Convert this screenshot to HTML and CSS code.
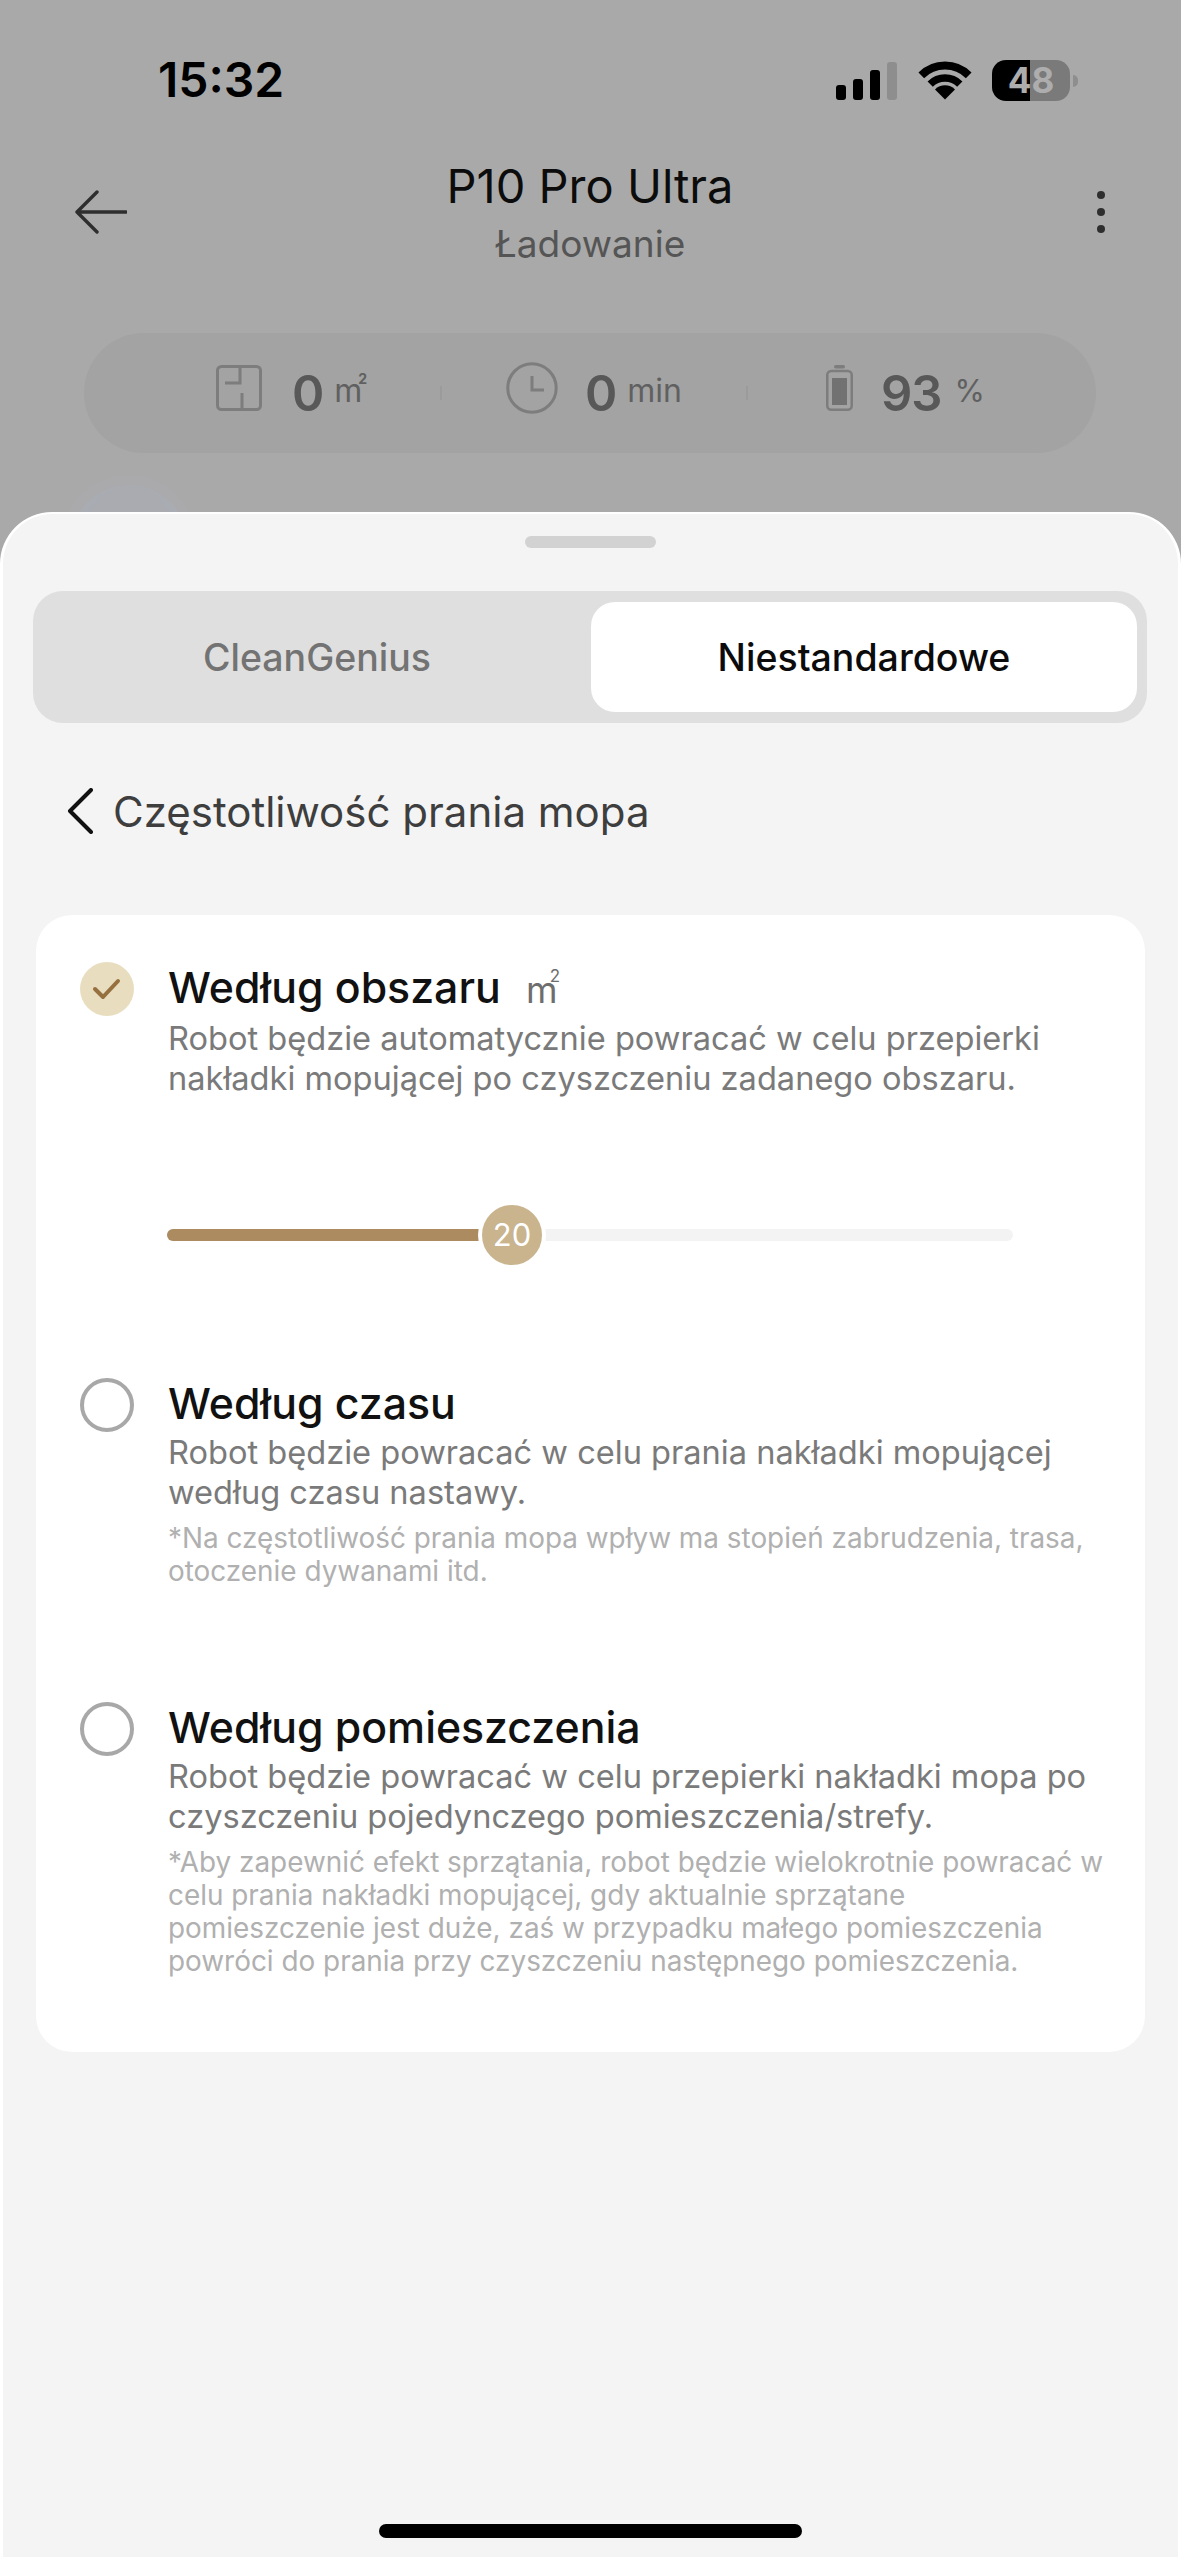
FILE: index.html
```html
<!DOCTYPE html>
<html lang="pl">
<head>
<meta charset="utf-8">
<title>P10 Pro Ultra</title>
<link rel="stylesheet" href="styles.css">
</head>
<body>
<div class="screen">
  <div class="backdrop">
    <div class="statusbar">
      <span class="time">15:32</span>
      <div class="status-icons">
        <div class="signal">
          <i class="bar b1"></i><i class="bar b2"></i><i class="bar b3"></i><i class="bar b4"></i>
        </div>
        <svg class="wifi" viewBox="0 0 54 40" width="54" height="40">
          <path d="M3.3 15.3A33.5 33.5 0 0 1 50.7 15.3" fill="none" stroke="#000" stroke-width="8"/>
          <path d="M12.2 24.2A21 21 0 0 1 41.8 24.2" fill="none" stroke="#000" stroke-width="7.5"/>
          <path d="M27 39.5L17 29.5A14 14 0 0 1 37 29.5Z" fill="#000"/>
        </svg>
        <div class="battery"><span class="battery-body">48</span><i class="battery-nub"></i></div>
      </div>
    </div>

    <div class="nav">
      <svg class="nav-back" viewBox="0 0 52 44" width="52" height="44">
        <path d="M22 2L2 22L22 42M2 22H51" fill="none" stroke="#2e2e2e" stroke-width="3.4" stroke-linecap="round" stroke-linejoin="round"/>
      </svg>
      <div class="nav-title">
        <div class="device">P10 Pro Ultra</div>
        <div class="state">Ładowanie</div>
      </div>
      <div class="dots"><i></i><i></i><i></i></div>
    </div>

    <div class="stats">
      <div class="stat stat-area">
        <svg viewBox="0 0 46 46" width="46" height="46" class="stat-icon">
          <rect x="1.5" y="1.5" width="43" height="43" rx="4" fill="none" stroke="#7d7d7d" stroke-width="3"/>
          <path d="M9 18H24V2M26 28V45" fill="none" stroke="#7d7d7d" stroke-width="3"/>
        </svg>
        <b class="num">0</b><span class="unit">m<sup>2</sup></span>
      </div>
      <i class="sep"></i>
      <div class="stat stat-time">
        <svg viewBox="0 0 52 52" width="52" height="52" class="stat-icon">
          <circle cx="26" cy="26" r="24.2" fill="none" stroke="#7d7d7d" stroke-width="3"/>
          <path d="M26 14V28H38" fill="none" stroke="#7d7d7d" stroke-width="3"/>
        </svg>
        <b class="num">0</b><span class="unit">min</span>
      </div>
      <i class="sep"></i>
      <div class="stat stat-batt">
        <svg viewBox="0 0 27 46" width="27" height="46" class="stat-icon">
          <rect x="8" y="0" width="11" height="3.5" rx="1.7" fill="#7d7d7d"/>
          <rect x="1.25" y="6" width="24.5" height="38.75" rx="4" fill="none" stroke="#7d7d7d" stroke-width="2.5"/>
          <rect x="6" y="13" width="15" height="27" fill="#727272"/>
        </svg>
        <b class="num">93</b><span class="unit">%</span>
      </div>
    </div>
    <div class="robot"></div>
  </div>

  <section class="sheet">
    <div class="handle"></div>
    <div class="tabs">
      <div class="tab">CleanGenius</div>
      <div class="tab tab-active">Niestandardowe</div>
    </div>
    <div class="subhead">
      <svg viewBox="0 0 28 46" width="28" height="46">
        <path d="M25 2L4 23L25 44" fill="none" stroke="#111" stroke-width="4" stroke-linecap="round" stroke-linejoin="round"/>
      </svg>
      <span>Częstotliwość prania mopa</span>
    </div>

    <div class="card">
      <div class="option option-area">
        <span class="radio radio-on">
          <svg viewBox="0 0 30 26" width="30" height="26">
            <path d="M3 13L11 21L26 5" fill="none" stroke="#96703f" stroke-width="4" stroke-linecap="round" stroke-linejoin="round"/>
          </svg>
        </span>
        <div class="option-body">
          <h3>Według obszaru <span class="title-unit">m<sup>2</sup></span></h3>
          <p class="desc">Robot będzie automatycznie powracać w celu przepierki<br>nakładki mopującej po czyszczeniu zadanego obszaru.</p>
          <div class="slider">
            <div class="slider-fill"></div>
            <div class="slider-thumb">20</div>
          </div>
        </div>
      </div>

      <div class="option option-time">
        <span class="radio"></span>
        <div class="option-body">
          <h3>Według czasu</h3>
          <p class="desc">Robot będzie powracać w celu prania nakładki mopującej<br>według czasu nastawy.</p>
          <p class="note">*Na częstotliwość prania mopa wpływ ma stopień zabrudzenia, trasa,<br>otoczenie dywanami itd.</p>
        </div>
      </div>

      <div class="option option-room">
        <span class="radio"></span>
        <div class="option-body">
          <h3>Według pomieszczenia</h3>
          <p class="desc">Robot będzie powracać w celu przepierki nakładki mopa po<br>czyszczeniu pojedynczego pomieszczenia/strefy.</p>
          <p class="note">*Aby zapewnić efekt sprzątania, robot będzie wielokrotnie powracać w<br>celu prania nakładki mopującej, gdy aktualnie sprzątane<br>pomieszczenie jest duże, zaś w przypadku małego pomieszczenia<br>powróci do prania przy czyszczeniu następnego pomieszczenia.</p>
        </div>
      </div>
    </div>

    <div class="home-indicator"></div>
  </section>
</div>
</body>
</html>
```
FILE: styles.css
```css
* { box-sizing: border-box; }
html, body { margin: 0; padding: 0; }
body {
  width: 1181px;
  height: 2560px;
  overflow: hidden;
  background: #a9a9a9;
  font-family: Inter, "Noto Sans", "Liberation Sans", sans-serif;
  color: #111;
}
h3, p { margin: 0; }
i { display: block; }

.screen {
  position: relative;
  width: 1181px;
  height: 2560px;
  overflow: hidden;
  background: #a9a9a9;
}
.backdrop { height: 512px; }

/* Status bar */
.statusbar {
  height: 120px;
  padding: 40px 103px 0 158px;
  display: flex;
  justify-content: space-between;
  align-items: center;
}
.time {
  font-size: 48px;
  font-weight: 600;
  color: #000;
  line-height: 80px;
}
.status-icons { display: flex; align-items: flex-end; height: 41px; margin-top: 1px; }
.signal { display: flex; align-items: flex-end; gap: 7px; height: 38px; margin-right: 21px; margin-bottom: 1px; }
.bar { width: 10px; background: #000; border-radius: 3px; }
.b1 { height: 15px; }
.b2 { height: 21px; }
.b3 { height: 30px; }
.b4 { height: 38px; background: #8e8e8e; }
.wifi { display: block; margin-right: 20px; margin-bottom: 1px; }
.battery { display: flex; align-items: center; height: 41px; }
.battery-body {
  width: 78px;
  height: 41px;
  border-radius: 14px;
  background: linear-gradient(90deg, #000 0 38px, #7a7a7a 38px 100%);
  color: #adadad;
  font-size: 35px;
  font-weight: 700;
  line-height: 41px;
  text-align: center;
}
.battery-nub { width: 5px; height: 12px; margin-left: 3px; background: #8e8e8e; border-radius: 0 5px 5px 0; }

/* Nav */
.nav {
  display: grid;
  grid-template-columns: 1fr auto 1fr;
  align-items: center;
  padding: 24px 76px 0 75px;
  height: 160px;
}
.nav-back { display: block; }
.nav-title { text-align: center; }
.device { font-size: 47px; line-height: 60px; color: #0c0c0c; font-weight: 400; }
.state { font-size: 37px; line-height: 50px; margin-top: 3px; color: #555; }
.dots { justify-self: end; display: flex; flex-direction: column; gap: 9px; }
.dots i { width: 8px; height: 8px; border-radius: 50%; background: #2e2e2e; }

/* Stats pill */
.stats {
  margin: 53px 85px 0 84px;
  height: 120px;
  border-radius: 60px;
  background: #a3a3a3;
  display: flex;
  align-items: center;
  padding-left: 132px;
}
.stat { display: flex; align-items: center; }
.stat-icon { display: block; flex: none; margin-bottom: 10px; }
.num { font-size: 49px; font-weight: 600; color: #585858; line-height: 60px; margin-top: 2px; letter-spacing: -1px; }
.unit { font-size: 32px; color: #606060; margin-top: -4px; line-height: 40px; }
.unit sup { font-size: 14px; font-weight: 700; line-height: 0; margin-left: -4px; vertical-align: 18px; }
.stat-area { width: 224px; }
.stat-area .num { margin-left: 30px; }
.stat-area .unit { margin-left: 11px; }
.sep { width: 2px; height: 14px; background: #9b9b9b; flex: none; margin-bottom: 0; }
.stat-time { width: 304px; padding-left: 64px; }
.stat-time .num { margin-left: 27px; }
.stat-time .unit { margin-left: 11px; }
.stat-batt { padding-left: 78px; }
.stat-batt .num { margin-left: 28px; }
.stat-batt .unit { margin-left: 13px; font-size: 31px; }

.robot {
  position: absolute;
  left: 71px;
  top: 485px;
  width: 116px;
  height: 116px;
  border-radius: 50%;
  background: radial-gradient(circle at 50% 35%, #a9abb1 0 40%, #adb2c1 100%);
  box-shadow: 0 0 0 10px rgba(180, 184, 196, 0.12);
}

/* Sheet */
.sheet {
  position: relative;
  height: 2048px;
  border: solid #fff;
  border-width: 2px 3px 3px;
  border-radius: 52px 52px 0 0;
  background: #f4f4f4;
  padding-top: 22px;
  overflow: hidden;
}
.handle { width: 131px; height: 12px; border-radius: 6px; background: #d2d2d2; margin: 0 auto; }
.tabs {
  margin: 43px 31px 0 30px;
  height: 132px;
  padding: 11px 10px;
  border-radius: 30px;
  background: #dfdfdf;
  display: grid;
  grid-template-columns: 548px 546px;
}
.tab {
  display: flex;
  align-items: center;
  justify-content: center;
  font-size: 37.5px;
  font-weight: 500;
  color: #737373;
  border-radius: 24px;
}
.tab-active { background: #fff; color: #0b0b0b; }

.subhead {
  margin-top: 65px;
  padding-left: 63px;
  display: flex;
  align-items: center;
  gap: 19px;
  height: 46px;
  font-size: 42px;
  color: #3e3e3e;
}

.card {
  margin: 81px 33px 0;
  height: 1137px;
  padding: 47px 0 0 44px;
  background: #fff;
  border-radius: 36px;
}
.option { display: grid; grid-template-columns: 54px 1fr; column-gap: 34px; }
.option-time { margin-top: 137px; }
.option-room { margin-top: 114px; }
.radio {
  width: 54px;
  height: 54px;
  border-radius: 50%;
  border: 4px solid #a8a8a8;
  display: flex;
  align-items: center;
  justify-content: center;
}
.radio-on { border: 0; background: #e8ddbf; }

h3 { font-size: 42.8px; font-weight: 500; line-height: 52px; color: #111; }
.title-unit { font-size: 36px; font-weight: 400; color: #6e6e6e; margin-left: 14px; letter-spacing: -4px; }
.title-unit sup { font-size: 17px; line-height: 0; margin-left: -4px; vertical-align: 21px; letter-spacing: 0; }
.desc { margin-top: 2px; font-size: 32.6px; line-height: 40px; color: #7a7a7a; white-space: nowrap; }
.note { margin-top: 10px; font-size: 27.9px; line-height: 33px; color: #b0b0b0; white-space: nowrap; }

.slider {
  position: relative;
  margin: 131px 0 0 -1px;
  width: 846px;
  height: 12px;
  border-radius: 6px;
  background: #f3f3f3;
}
.slider-fill {
  width: 312px;
  height: 12px;
  border-radius: 6px 0 0 6px;
  background: #ab8b5f;
}
.slider-thumb {
  position: absolute;
  left: 311px;
  top: -28px;
  width: 68px;
  height: 68px;
  border: 4px solid #fff;
  border-radius: 50%;
  background: #c9b48e;
  color: #fff;
  font-size: 31px;
  line-height: 60px;
  text-align: center;
}

.home-indicator {
  position: absolute;
  left: 376px;
  top: 2010px;
  width: 423px;
  height: 14px;
  border-radius: 7px;
  background: #000;
}
```
